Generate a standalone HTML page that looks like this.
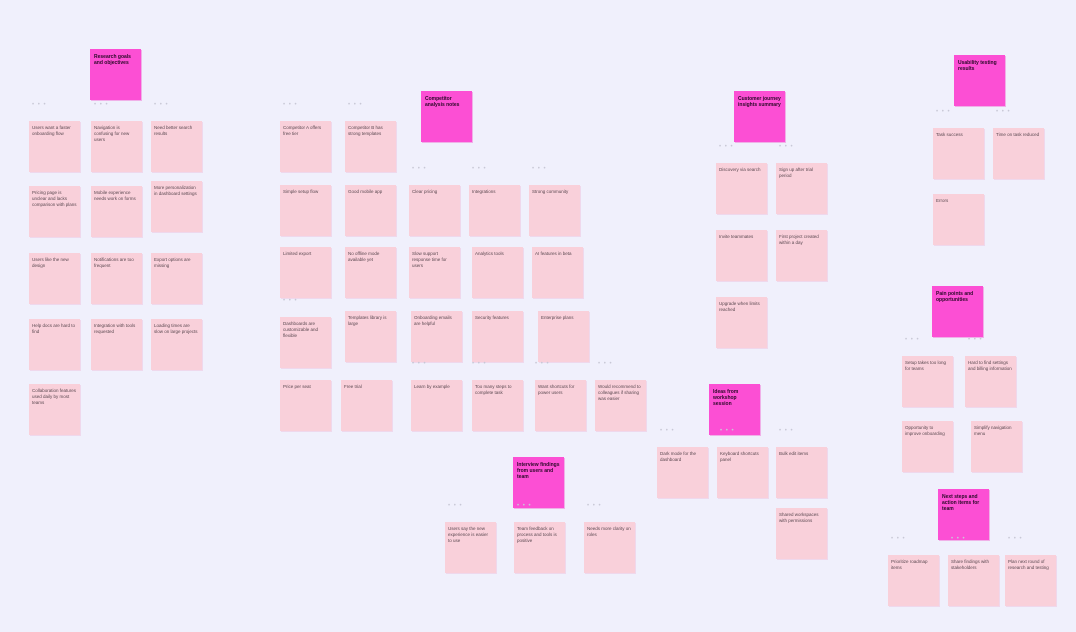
<!DOCTYPE html>
<html><head><meta charset="utf-8"><style>
html,body{margin:0;padding:0}
body{width:1076px;height:632px;background:#f0f0fc;position:relative;overflow:hidden;font-family:"Liberation Sans",sans-serif}
.s{position:absolute;width:51px;height:51px;background:#f9d0da;box-sizing:border-box;padding:4px 3px;font-size:4.5px;line-height:6px;color:#5a4850;overflow:hidden;box-shadow:1px 1px 0 #efd8ec}
.m{position:absolute;width:51px;height:51px;background:#fc4fd4;box-sizing:border-box;padding:5px 4px;font-size:5px;line-height:6px;color:#2a0828;font-weight:bold;overflow:hidden;box-shadow:1px 1px 0 #f0b0e8}
.d{position:absolute;font-size:6px;color:#c8c8d6;letter-spacing:1px}
</style></head><body>
<div class="m" style="left:90px;top:49px">Research goals and objectives</div>
<div class="m" style="left:421px;top:91px">Competitor analysis notes</div>
<div class="m" style="left:513px;top:457px">Interview findings from users and team</div>
<div class="m" style="left:734px;top:91px">Customer journey insights summary</div>
<div class="m" style="left:709px;top:384px">Ideas from workshop session</div>
<div class="m" style="left:954px;top:55px">Usability testing results</div>
<div class="m" style="left:932px;top:286px">Pain points and opportunities</div>
<div class="m" style="left:938px;top:489px">Next steps and action items for team</div>

<div class="s" style="left:29px;top:121px">Users want a faster onboarding flow</div>
<div class="s" style="left:91px;top:121px">Navigation is confusing for new users</div>
<div class="s" style="left:151px;top:121px">Need better search results</div>
<div class="s" style="left:29px;top:186px">Pricing page is unclear and lacks comparison with plans</div>
<div class="s" style="left:91px;top:186px">Mobile experience needs work on forms</div>
<div class="s" style="left:151px;top:181px">More personalization in dashboard settings</div>
<div class="s" style="left:29px;top:253px">Users like the new design</div>
<div class="s" style="left:91px;top:253px">Notifications are too frequent</div>
<div class="s" style="left:151px;top:253px">Export options are missing</div>
<div class="s" style="left:29px;top:319px">Help docs are hard to find</div>
<div class="s" style="left:91px;top:319px">Integration with tools requested</div>
<div class="s" style="left:151px;top:319px">Loading times are slow on large projects</div>
<div class="s" style="left:29px;top:384px">Collaboration features used daily by most teams</div>

<div class="s" style="left:280px;top:121px">Competitor A offers free tier</div>
<div class="s" style="left:345px;top:121px">Competitor B has strong templates</div>
<div class="s" style="left:280px;top:185px">Simple setup flow</div>
<div class="s" style="left:345px;top:185px">Good mobile app</div>
<div class="s" style="left:409px;top:185px">Clear pricing</div>
<div class="s" style="left:469px;top:185px">Integrations</div>
<div class="s" style="left:529px;top:185px">Strong community</div>
<div class="s" style="left:280px;top:247px">Limited export</div>
<div class="s" style="left:345px;top:247px">No offline mode available yet</div>
<div class="s" style="left:409px;top:247px">Slow support response time for users</div>
<div class="s" style="left:472px;top:247px">Analytics tools</div>
<div class="s" style="left:532px;top:247px">AI features in beta</div>
<div class="s" style="left:280px;top:317px">Dashboards are customizable and flexible</div>
<div class="s" style="left:345px;top:311px">Templates library is large</div>
<div class="s" style="left:411px;top:311px">Onboarding emails are helpful</div>
<div class="s" style="left:472px;top:311px">Security features</div>
<div class="s" style="left:538px;top:311px">Enterprise plans</div>
<div class="s" style="left:280px;top:380px">Price per seat</div>
<div class="s" style="left:341px;top:380px">Free trial</div>
<div class="s" style="left:411px;top:380px">Learn by example</div>
<div class="s" style="left:472px;top:380px">Too many steps to complete task</div>
<div class="s" style="left:535px;top:380px">Want shortcuts for power users</div>
<div class="s" style="left:595px;top:380px">Would recommend to colleagues if sharing was easier</div>
<div class="s" style="left:445px;top:522px">Users say the new experience is easier to use</div>
<div class="s" style="left:514px;top:522px">Team feedback on process and tools is positive</div>
<div class="s" style="left:584px;top:522px">Needs more clarity on roles</div>

<div class="s" style="left:716px;top:163px">Discovery via search</div>
<div class="s" style="left:776px;top:163px">Sign up after trial period</div>
<div class="s" style="left:716px;top:230px">Invite teammates</div>
<div class="s" style="left:776px;top:230px">First project created within a day</div>
<div class="s" style="left:716px;top:297px">Upgrade when limits reached</div>
<div class="s" style="left:657px;top:447px">Dark mode for the dashboard</div>
<div class="s" style="left:717px;top:447px">Keyboard shortcuts panel</div>
<div class="s" style="left:776px;top:447px">Bulk edit items</div>
<div class="s" style="left:776px;top:508px">Shared workspaces with permissions</div>

<div class="s" style="left:933px;top:128px">Task success</div>
<div class="s" style="left:993px;top:128px">Time on task reduced</div>
<div class="s" style="left:933px;top:194px">Errors</div>
<div class="s" style="left:902px;top:356px">Setup takes too long for teams</div>
<div class="s" style="left:965px;top:356px">Hard to find settings and billing information</div>
<div class="s" style="left:902px;top:421px">Opportunity to improve onboarding</div>
<div class="s" style="left:971px;top:421px">Simplify navigation menu</div>
<div class="s" style="left:888px;top:555px">Prioritize roadmap items</div>
<div class="s" style="left:948px;top:555px">Share findings with stakeholders</div>
<div class="s" style="left:1005px;top:555px">Plan next round of research and testing</div>

<div class="d" style="left:32px;top:102px">• • •</div><div class="d" style="left:94px;top:102px">• • •</div><div class="d" style="left:154px;top:102px">• • •</div>
<div class="d" style="left:283px;top:102px">• • •</div><div class="d" style="left:348px;top:102px">• • •</div>
<div class="d" style="left:412px;top:166px">• • •</div><div class="d" style="left:472px;top:166px">• • •</div><div class="d" style="left:532px;top:166px">• • •</div>
<div class="d" style="left:719px;top:144px">• • •</div><div class="d" style="left:779px;top:144px">• • •</div>
<div class="d" style="left:936px;top:109px">• • •</div><div class="d" style="left:996px;top:109px">• • •</div>
<div class="d" style="left:905px;top:337px">• • •</div><div class="d" style="left:968px;top:337px">• • •</div>
<div class="d" style="left:660px;top:428px">• • •</div><div class="d" style="left:720px;top:428px">• • •</div><div class="d" style="left:779px;top:428px">• • •</div>
<div class="d" style="left:448px;top:503px">• • •</div><div class="d" style="left:517px;top:503px">• • •</div><div class="d" style="left:587px;top:503px">• • •</div>
<div class="d" style="left:891px;top:536px">• • •</div><div class="d" style="left:951px;top:536px">• • •</div><div class="d" style="left:1008px;top:536px">• • •</div>
<div class="d" style="left:283px;top:298px">• • •</div><div class="d" style="left:412px;top:361px">• • •</div><div class="d" style="left:472px;top:361px">• • •</div><div class="d" style="left:535px;top:361px">• • •</div><div class="d" style="left:598px;top:361px">• • •</div>
</body></html>
